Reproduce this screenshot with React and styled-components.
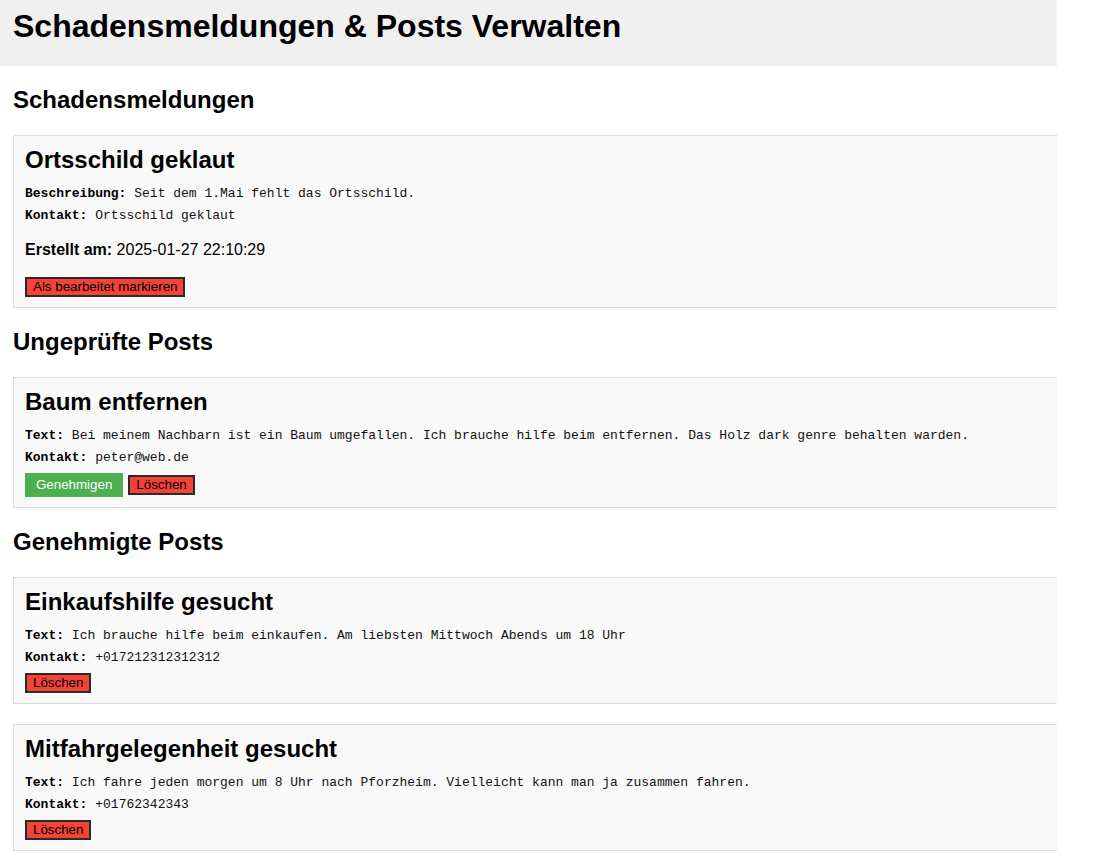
import styled, { createGlobalStyle } from "styled-components";

const GlobalStyle = createGlobalStyle`
  body {
    margin: 0;
    background: #fff;
    font-family: "Liberation Sans", Arial, sans-serif;
    color: #000;
  }
`;

const reports = [
  {
    title: "Ortsschild geklaut",
    description: "Seit dem 1.Mai fehlt das Ortsschild.",
    contact: "Ortsschild geklaut",
    created: "2025-01-27 22:10:29",
  },
];

const pendingPosts = [
  {
    title: "Baum entfernen",
    text: "Bei meinem Nachbarn ist ein Baum umgefallen. Ich brauche hilfe beim entfernen. Das Holz dark genre behalten warden.",
    contact: "peter@web.de",
  },
];

const approvedPosts = [
  {
    title: "Einkaufshilfe gesucht",
    text: "Ich brauche hilfe beim einkaufen. Am liebsten Mittwoch Abends um 18 Uhr",
    contact: "+017212312312312",
  },
  {
    title: "Mitfahrgelegenheit gesucht",
    text: "Ich fahre jeden morgen um 8 Uhr nach Pforzheim. Vielleicht kann man ja zusammen fahren.",
    contact: "+01762342343",
  },
];

const App = () => {
  return (
    <Page>
      <GlobalStyle />
      <Header>
        <Title>Schadensmeldungen &amp; Posts Verwalten</Title>
      </Header>
      <Main>
        <SectionTitle>Schadensmeldungen</SectionTitle>
        {reports.map((r) => (
          <Card key={r.title}>
            <CardTitle>{r.title}</CardTitle>
            <Detail>
              <Label>Beschreibung:</Label> {r.description}
            </Detail>
            <Detail>
              <Label>Kontakt:</Label> {r.contact}
            </Detail>
            <Created>
              <Label>Erstellt am:</Label> {r.created}
            </Created>
            <DangerButton>Als bearbeitet markieren</DangerButton>
          </Card>
        ))}

        <SectionTitle>Ungeprüfte Posts</SectionTitle>
        {pendingPosts.map((p) => (
          <Card key={p.title}>
            <CardTitle>{p.title}</CardTitle>
            <Detail>
              <Label>Text:</Label> {p.text}
            </Detail>
            <Detail>
              <Label>Kontakt:</Label> {p.contact}
            </Detail>
            <Actions>
              <ApproveButton>Genehmigen</ApproveButton>
              <DangerButton>Löschen</DangerButton>
            </Actions>
          </Card>
        ))}

        <SectionTitle>Genehmigte Posts</SectionTitle>
        {approvedPosts.map((p) => (
          <Card key={p.title}>
            <CardTitle>{p.title}</CardTitle>
            <Detail>
              <Label>Text:</Label> {p.text}
            </Detail>
            <Detail>
              <Label>Kontakt:</Label> {p.contact}
            </Detail>
            <Actions>
              <DangerButton>Löschen</DangerButton>
            </Actions>
          </Card>
        ))}
      </Main>
    </Page>
  );
};

const Page = styled.div`
  width: 1057px;
  overflow: hidden;
`;

const Header = styled.header`
  background: #f0f0f0;
  padding: 8px 13px 0;
  height: 66px;
  box-sizing: border-box;
`;

const Title = styled.h1`
  margin: 0;
  font-size: 32px;
  line-height: 37px;
  font-weight: bold;
`;

const Main = styled.main`
  padding: 0 0 0 13px;
  display: flow-root;
`;

const SectionTitle = styled.h2`
  font-size: 24px;
  line-height: 28px;
  font-weight: bold;
  margin: 20px 0 21px;
`;

const Card = styled.div`
  background: #f9f9f9;
  border: 1px solid #ddd;
  padding: 10px 11px;
  margin: 0 -20px 20px 0;
`;

const CardTitle = styled.h3`
  font-size: 24px;
  line-height: 28px;
  font-weight: bold;
  margin: 0 0 11px;
`;

const Detail = styled.p`
  font-family: "Liberation Mono", "DejaVu Sans Mono", monospace;
  font-size: 13px;
  line-height: 18px;
  margin: 4px 0;
  color: #111;
`;

const Label = styled.strong`
  font-weight: bold;
  color: #000;
`;

const Created = styled.p`
  font-size: 16px;
  line-height: 18px;
  margin: 16px 0 18px;
`;

const Actions = styled.div`
  display: flex;
  align-items: center;
  gap: 5px;
  margin-top: 6px;
`;

const DangerButton = styled.button`
  font-family: "Liberation Sans", Arial, sans-serif;
  font-size: 13.33px;
  line-height: 14px;
  padding: 1px 6px;
  background: #f44336;
  color: #000;
  border: 2px solid #2a2a2a;
  border-radius: 0;
  cursor: pointer;
`;

const ApproveButton = styled.button`
  font-family: "Liberation Sans", Arial, sans-serif;
  font-size: 13.33px;
  line-height: 14px;
  padding: 5px 11px;
  background: #4caf50;
  color: #fff;
  border: none;
  border-radius: 0;
  cursor: pointer;
`;

export default App;
